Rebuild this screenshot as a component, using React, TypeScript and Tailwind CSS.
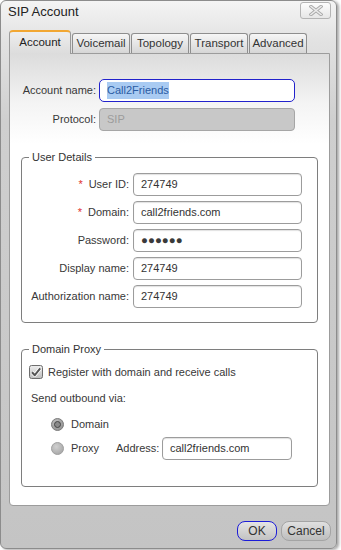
import React from 'react';

const FONT = "font-['Liberation_Sans',Arial,sans-serif]";

const TABS = ['Voicemail', 'Topology', 'Transport', 'Advanced'];

const USER_FIELDS = [
  { label: 'User ID:', value: '274749', required: true },
  { label: 'Domain:', value: 'call2friends.com', required: true },
  { label: 'Password:', value: '●●●●●●', required: false, secret: true },
  { label: 'Display name:', value: '274749', required: false },
  { label: 'Authorization name:', value: '274749', required: false },
];

function TextBox({
  value,
  className = '',
  secret,
}: {
  value: string;
  className?: string;
  secret?: boolean;
}) {
  return (
    <div
      className={`flex h-[23px] shrink-0 items-center rounded-[4px] border border-[#9c9c9c] bg-white pl-[7px] text-[#333] shadow-[inset_0_1px_1px_rgba(0,0,0,0.12)] ${className}`}
    >
      <span className={secret ? 'text-[11.5px] text-[#3a3a3a]' : ''}>{value}</span>
    </div>
  );
}

function CloseGlyph() {
  return (
    <svg width="14" height="11" viewBox="0 0 14 11">
      <path d="M2 1.5 L12 9.5 M12 1.5 L2 9.5" stroke="#a9a9a9" strokeWidth="3.4" strokeLinecap="square" />
      <path d="M2 1.5 L12 9.5 M12 1.5 L2 9.5" stroke="#ececec" strokeWidth="1.6" strokeLinecap="square" />
    </svg>
  );
}

function CheckBox() {
  return (
    <svg width="14" height="14" viewBox="0 0 14 14">
      <defs>
        <linearGradient id="cb" x1="0" y1="0" x2="0" y2="1">
          <stop offset="0" stopColor="#eeeeee" />
          <stop offset="1" stopColor="#bdbdbd" />
        </linearGradient>
      </defs>
      <rect x="0.5" y="0.5" width="13" height="13" rx="2" fill="url(#cb)" stroke="#6e6e6e" />
      <path d="M3 7.2 L5.8 10.2 L11.2 3.4" fill="none" stroke="#fff" strokeWidth="3.6" strokeLinejoin="round" />
      <path d="M3 7.2 L5.8 10.2 L11.2 3.4" fill="none" stroke="#555" strokeWidth="2" strokeLinejoin="round" />
    </svg>
  );
}

function Radio({ checked }: { checked?: boolean }) {
  return (
    <svg width="13" height="13" viewBox="0 0 13 13" className="shrink-0">
      <defs>
        <radialGradient id={checked ? 'rOn' : 'rOff'} cx="0.4" cy="0.35" r="0.7">
          <stop offset="0" stopColor={checked ? '#c4c4c4' : '#d0d0d0'} />
          <stop offset="1" stopColor={checked ? '#8f8f8f' : '#a6a6a6'} />
        </radialGradient>
      </defs>
      <circle cx="6.5" cy="6.5" r="6" fill={`url(#${checked ? 'rOn' : 'rOff'})`} stroke={checked ? '#7c7c7c' : '#a0a0a0'} />
      {checked ? <circle cx="6.5" cy="6.5" r="3" fill="#8a8a8a" stroke="#444" strokeWidth="1" /> : null}
    </svg>
  );
}

function Legend({ children }: { children: React.ReactNode }) {
  return (
    <legend className="ml-[7px] px-[3px] leading-[14px] text-[#333]">{children}</legend>
  );
}

export default function App() {
  return (
    <div className={`${FONT} h-[550px] w-[341px] bg-white text-[11px] text-[#383838]`}>
      <div className="flex h-[549px] w-[337px] flex-col rounded-[6px] border border-[#8c8c8c] bg-[linear-gradient(#f4f4f4_0px,#e2e2e2_40px,#cfcfcf_120px,#c4c4c4_100%)] shadow-[2px_1px_3px_rgba(0,0,0,0.35)]">
        {/* title bar */}
        <div className="flex h-[29px] shrink-0 items-start justify-between pl-[7px] pr-[5px]">
          <span className="pt-[3px] text-[13px] leading-[16px] text-[#222]">SIP Account</span>
          <div className="mt-[1px] flex h-[17px] w-[31px] items-center justify-center rounded-[3px] border border-[#b4b4b4] bg-[linear-gradient(#fdfdfd,#e6e6e6)]">
            <CloseGlyph />
          </div>
        </div>

        {/* tabs */}
        <div className="flex h-[23px] shrink-0 items-end pl-[8px]">
          <div className="relative z-10 -mb-[1px] flex h-[24px] w-[62px] items-center justify-center rounded-t-[4px] border-x border-t-2 border-x-[#9a9a9a] border-t-[#f2a732] bg-[linear-gradient(#eeeeee,#dcdcdc)] text-[11.5px] text-[#222]">
            Account
          </div>
          {TABS.map((t) => (
            <div
              key={t}
              className="ml-[1px] flex h-[20px] w-[58px] items-center justify-center rounded-t-[3px] border-x border-t border-[#8e8e8e] bg-[linear-gradient(#f6f6f6,#d6d6d6)] text-[11.5px] text-[#333]"
            >
              {t}
            </div>
          ))}
        </div>

        {/* panel */}
        <div className="ml-[8px] mr-[6px] flex flex-col rounded-b-[4px] border border-[#9c9c9c] bg-[linear-gradient(#dcdcdc_0px,#f4f4f4_50px,#ffffff_90px)] pb-[18px] pt-[25px]">
          <div className="flex items-center">
            <span className="w-[86px] text-right">Account name:</span>
            <div className="ml-[3px] flex h-[23px] w-[196px] items-center rounded-[5px] border border-[#2222cc] bg-white pl-[7px]">
              <span className="bg-[#a9cbf2] text-[#2a5ba3]">Call2Friends</span>
            </div>
          </div>
          <div className="mt-[6px] flex items-center">
            <span className="w-[86px] text-right">Protocol:</span>
            <div className="ml-[3px] flex h-[23px] w-[196px] items-center rounded-[4px] border border-[#a6a6a6] bg-[#c8c8c8] pl-[7px] text-[#9c9c9c]">
              SIP
            </div>
          </div>

          <fieldset className="mx-[11px] mt-[19px] rounded-[4px] border border-[#7e7e7e] pb-[14px] pr-[14px] pt-[9px]">
            <Legend>User Details</Legend>
            <div className="flex flex-col gap-[5px]">
              {USER_FIELDS.map((f) => (
                <div key={f.label} className="flex items-center">
                  <span className="w-[107px] text-right">
                    {f.required ? <span className="mr-[6px] text-[#e03030]">*</span> : null}
                    {f.label}
                  </span>
                  <TextBox value={f.value} secret={f.secret} className="ml-[4px] w-[169px]" />
                </div>
              ))}
            </div>
          </fieldset>

          <fieldset className="mx-[11px] mt-[19px] rounded-[4px] border border-[#7e7e7e] pb-[26px] pt-[9px]">
            <Legend>Domain Proxy</Legend>
            <div className="flex items-center pl-[7px]">
              <CheckBox />
              <span className="ml-[5px] leading-[14px]">Register with domain and receive calls</span>
            </div>
            <div className="mt-[12px] pl-[9px] leading-[14px]">Send outbound via:</div>
            <div className="mt-[9px] flex h-[20px] items-center pl-[29px]">
              <Radio checked />
              <span className="ml-[7px]">Domain</span>
            </div>
            <div className="mt-[3px] flex items-center pl-[29px]">
              <Radio />
              <span className="ml-[7px] w-[45px] shrink-0">Proxy</span>
              <span className="w-[46px] shrink-0 whitespace-nowrap">Address:</span>
              <TextBox value="call2friends.com" className="w-[130px]" />
            </div>
          </fieldset>
        </div>

        {/* buttons */}
        <div className="mt-[15px] flex justify-end gap-[4px] pr-[5px]">
          <div className="flex h-[20px] w-[40px] items-center justify-center rounded-[8px] border border-[#1c1cd8] bg-[linear-gradient(#e4e4e4,#c2c2c2)] text-[12px] text-[#333]">
            OK
          </div>
          <div className="flex h-[20px] w-[50px] items-center justify-center rounded-[8px] border border-[#a4a4a4] bg-[linear-gradient(#e0e0e0,#bdbdbd)] text-[12px] text-[#333]">
            Cancel
          </div>
        </div>
      </div>
    </div>
  );
}
